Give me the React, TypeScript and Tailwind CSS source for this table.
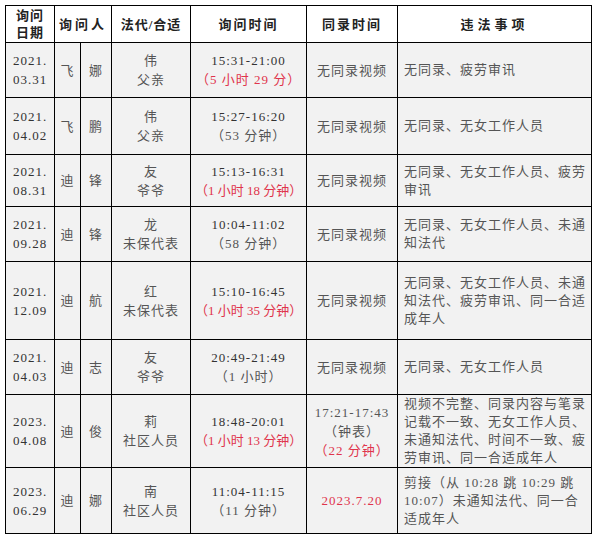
import React from 'react';

type Row = {
  date: [string, string];
  a: string;
  b: string;
  guardian: [string, string];
  time: string;
  dur: string;
  durRed: boolean;
  rec: React.ReactNode;
  issues: string[];
  h: number;
};

const red = 'text-[#e0344c]';

const rows: Row[] = [
  { date: ['2021.', '03.31'], a: '飞', b: '娜', guardian: ['伟', '父亲'], time: '15:31-21:00', dur: '（5 小时 29 分）', durRed: true, rec: '无同录视频', issues: ['无同录、疲劳审讯'], h: 55 },
  { date: ['2021.', '04.02'], a: '飞', b: '鹏', guardian: ['伟', '父亲'], time: '15:27-16:20', dur: '（53 分钟）', durRed: false, rec: '无同录视频', issues: ['无同录、无女工作人员'], h: 57 },
  { date: ['2021.', '08.31'], a: '迪', b: '锋', guardian: ['友', '爷爷'], time: '15:13-16:31', dur: '（1 小时 18 分钟）', durRed: true, rec: '无同录视频', issues: ['无同录、无女工作人员、疲劳', '审讯'], h: 52 },
  { date: ['2021.', '09.28'], a: '迪', b: '锋', guardian: ['龙', '未保代表'], time: '10:04-11:02', dur: '（58 分钟）', durRed: false, rec: '无同录视频', issues: ['无同录、无女工作人员、未通', '知法代'], h: 55 },
  { date: ['2021.', '12.09'], a: '迪', b: '航', guardian: ['红', '未保代表'], time: '15:10-16:45', dur: '（1 小时 35 分钟）', durRed: true, rec: '无同录视频', issues: ['无同录、无女工作人员、未通', '知法代、疲劳审讯、同一合适', '成年人'], h: 78 },
  { date: ['2021.', '04.03'], a: '迪', b: '志', guardian: ['友', '爷爷'], time: '20:49-21:49', dur: '（1 小时）', durRed: false, rec: '无同录视频', issues: ['无同录、无女工作人员'], h: 55 },
  {
    date: ['2023.', '04.08'], a: '迪', b: '俊', guardian: ['莉', '社区人员'], time: '18:48-20:01', dur: '（1 小时 13 分钟）', durRed: true,
    rec: (
      <>
        <div>17:21-17:43</div>
        <div>（钟表）</div>
        <div className={red}>（22 分钟）</div>
      </>
    ),
    issues: ['视频不完整、同录内容与笔录', '记载不一致、无女工作人员、', '未通知法代、时间不一致、疲', '劳审讯、同一合适成年人'], h: 73,
  },
  { date: ['2023.', '06.29'], a: '迪', b: '娜', guardian: ['南', '社区人员'], time: '11:04-11:15', dur: '（11 分钟）', durRed: false, rec: <span className={red}>2023.7.20</span>, issues: ['剪接（从 10:28 跳 10:29 跳', '10:07）未通知法代、同一合', '适成年人'], h: 66 },
];

const cell = 'border border-black align-middle p-0';

export default function App() {
  return (
    <div className="w-[596px] h-[537px] bg-white pt-[5px] pl-[5px]" style={{ fontFamily: '"Liberation Serif", "Noto Sans CJK SC", serif' }}>
      <table className="w-[586px] border-collapse table-fixed text-[13px] leading-[19px] tracking-[1px] text-[#555]">
        <colgroup>
          <col className="w-[49px]" />
          <col className="w-[26px]" />
          <col className="w-[31px]" />
          <col className="w-[79px]" />
          <col className="w-[116px]" />
          <col className="w-[91px]" />
          <col className="w-[194px]" />
        </colgroup>
        <thead>
          <tr className="h-[37px] bg-white text-[#222] font-bold">
            <th className={`${cell} leading-[17px]`}>
              <div>询问</div>
              <div>日期</div>
            </th>
            <th colSpan={2} className={`${cell} tracking-[3px]`}>询问人</th>
            <th className={cell}>法代/合适</th>
            <th className={`${cell} tracking-[2px]`}>询问时间</th>
            <th className={`${cell} tracking-[2px]`}>同录时间</th>
            <th className={`${cell} tracking-[4px]`}>违法事项</th>
          </tr>
        </thead>
        <tbody>
          {rows.map((r, i) => (
            <tr key={i} className="bg-[#f2f2f2]" style={{ height: r.h }}>
              <td className={`${cell} text-center text-[#333]`}>
                <div>{r.date[0]}</div>
                <div>{r.date[1]}</div>
              </td>
              <td className={`${cell} text-center`}>{r.a}</td>
              <td className={`${cell} text-center`}>{r.b}</td>
              <td className={`${cell} text-center`}>
                <div>{r.guardian[0]}</div>
                <div>{r.guardian[1]}</div>
              </td>
              <td className={`${cell} text-center whitespace-nowrap`}>
                <div className="text-[#333]">{r.time}</div>
                <div className={`${r.durRed ? red : ''} ${r.dur.length > 11 ? 'tracking-[0px]' : ''}`}>{r.dur}</div>
              </td>
              <td className={`${cell} text-center whitespace-nowrap`}>{r.rec}</td>
              <td className={`${cell} pl-[6px] leading-[18px] whitespace-nowrap`}>
                {r.issues.map((l, j) => (
                  <div key={j}>{l}</div>
                ))}
              </td>
            </tr>
          ))}
        </tbody>
      </table>
    </div>
  );
}
